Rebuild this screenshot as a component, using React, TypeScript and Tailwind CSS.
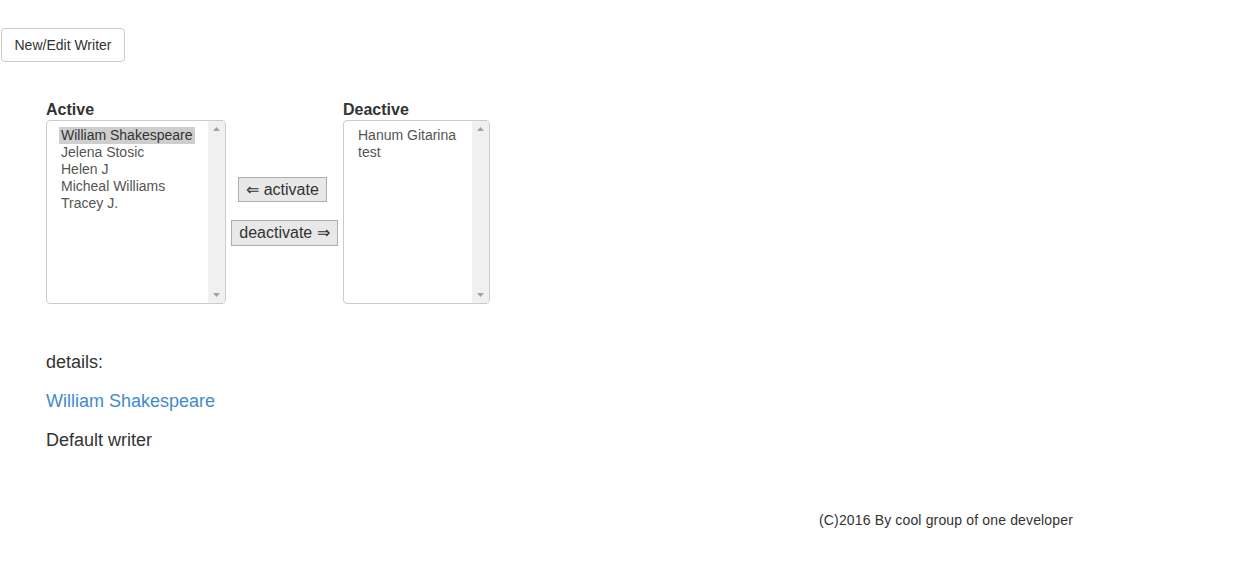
const active = ['William Shakespeare', 'Jelena Stosic', 'Helen J', 'Micheal Williams', 'Tracey J.'];
const deactive = ['Hanum Gitarina', 'test'];

function ListBox({ items, width, selected }: { items: string[]; width: string; selected?: number }) {
  return (
    <div className={`flex h-[184px] ${width} overflow-hidden rounded-[4px] border border-[#cccccc] bg-white`}>
      <div className="min-w-0 flex-1 pb-[5px] pl-[14px] pr-[2px] pt-[6px]">
        {items.map((name, i) => (
          <div key={name} className="flex h-[17px] items-center whitespace-nowrap">
            <span
              className={
                i === selected
                  ? 'ml-[-2px] bg-[#cecece] px-[2px] leading-[17px] text-[#333]'
                  : 'leading-[17px] text-[#555]'
              }
            >
              {name}
            </span>
          </div>
        ))}
      </div>
      <div className="flex w-[17px] shrink-0 flex-col items-center justify-between bg-[#f0f0f0] py-[6px]">
        <svg width="7" height="4" viewBox="0 0 7 4">
          <path d="M3.5 0 L7 4 L0 4 Z" fill="#a3a3a3" />
        </svg>
        <svg width="7" height="4" viewBox="0 0 7 4">
          <path d="M0 0 L7 0 L3.5 4 Z" fill="#a3a3a3" />
        </svg>
      </div>
    </div>
  );
}

export default function App() {
  return (
    <div className="min-h-[577px] bg-white font-['Liberation_Sans',Arial,sans-serif] text-[14px] text-[#333]">
      <div className="pl-[1px] pt-[28px]">
        <button className="h-[34px] w-[124px] rounded-[4px] border border-[#cccccc] bg-white text-[14px] text-[#333]">
          New/Edit Writer
        </button>
      </div>

      <div className="mt-[38px] flex pl-[46px]">
        <div className="flex flex-col">
          <div className="text-[16px] font-bold leading-[20px]">Active</div>
          <ListBox items={active} width="w-[180px]" selected={0} />
        </div>
        <div className="flex w-[117px] flex-col items-center pt-[77px]">
          <button className="ml-[-4px] h-[25px] w-[89px] border border-[#adadad] bg-[#e8e8e8] text-[16px] leading-[23px] text-[#333]">
            ⇐ activate
          </button>
          <button className="mt-[18px] h-[26px] w-[107px] border border-[#adadad] bg-[#e8e8e8] text-[16px] leading-[24px] text-[#333]">
            deactivate ⇒
          </button>
        </div>
        <div className="flex flex-col">
          <div className="text-[16px] font-bold leading-[20px]">Deactive</div>
          <ListBox items={deactive} width="w-[147px]" />
        </div>
      </div>

      <div className="mt-[46px] pl-[46px] text-[18px] leading-[24px]">
        <div>details:</div>
        <div className="mt-[15px] text-[#428bca]">William Shakespeare</div>
        <div className="mt-[15px]">Default writer</div>
      </div>

      <div className="mt-[58px] pl-[819px] text-[14px] leading-[20px] tracking-[0.15px]">
        (C)2016 By cool group of one developer
      </div>
    </div>
  );
}
